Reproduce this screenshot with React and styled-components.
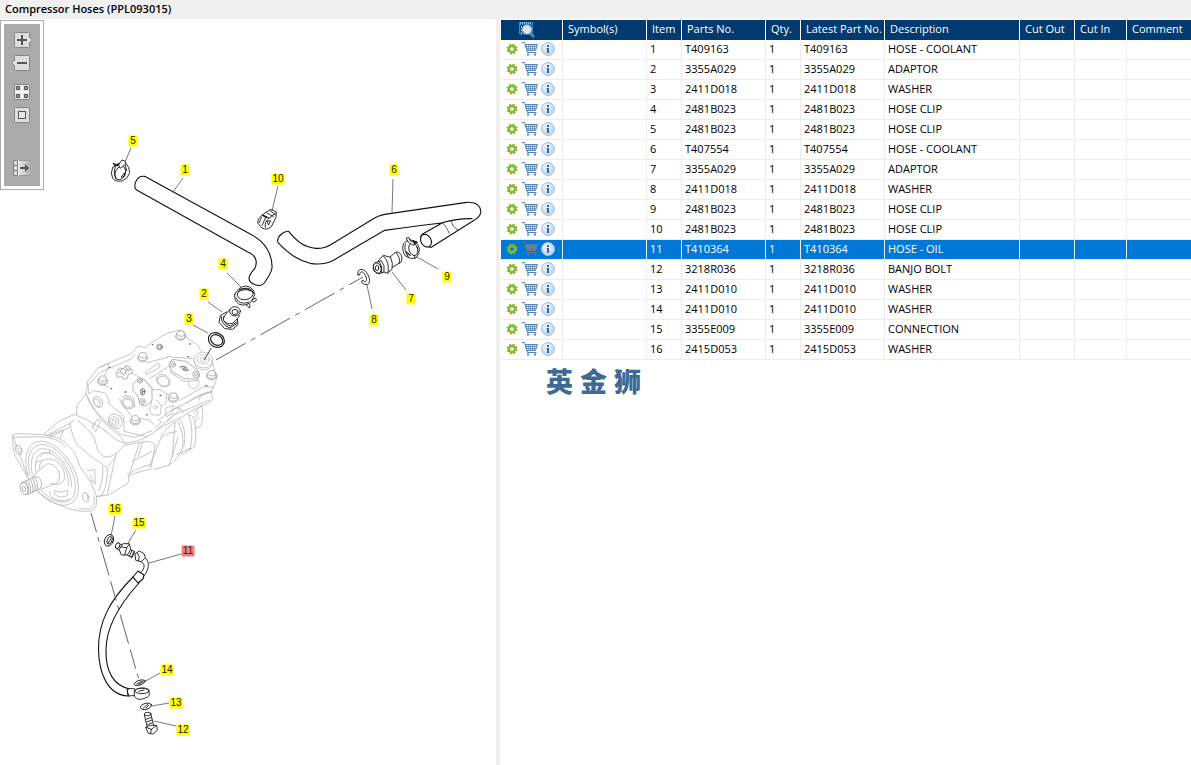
import React, { useState } from "react";
import styled, { createGlobalStyle } from "styled-components";

const GlobalStyle = createGlobalStyle`
  * {
    box-sizing: border-box;
  }
  body {
    margin: 0;
    background: #fff;
    color: #000;
    font-family: "Open Sans", "Noto Sans", sans-serif;
    font-size: 11px;
  }
`;

const Page = styled.div`
  display: flex;
  flex-direction: column;
  min-height: 100vh;
`;

const TitleBar = styled.h1`
  margin: 0;
  padding: 0 5px 2px;
  background: #f0f0f0;
  font-size: 11px;
  font-weight: 600;
  line-height: 17px;
`;

const Panes = styled.main`
  flex: 1;
  display: grid;
  grid-template-columns: minmax(0, 496fr) 4px minmax(0, 691fr);
`;

const DrawingPane = styled.section`
  position: relative;
  overflow: hidden;
`;

const Splitter = styled.div`
  background: #f0f0f0;
`;

const ListPane = styled.section`
  padding: 1px 0 0 1px;
  overflow: hidden;
`;

const ToolBox = styled.div`
  position: absolute;
  top: 1px;
  left: 0;
  padding: 3px;
  border: 1px solid #ababab;
  background: #fff;
`;

const ToolStack = styled.div`
  display: flex;
  flex-direction: column;
  gap: 13px;
  padding: 8px 8px 10px;
  background: #ababab;
`;

const ToolGroup = styled.div`
  display: flex;
  flex-direction: column;
  gap: 7px;
  padding-top: ${({ $apart }) => ($apart ? "24px" : "0")};
`;

const IconButton = styled.button`
  display: block;
  padding: 0;
  border: 0;
  background: none;
  cursor: pointer;
  line-height: 0;

  svg {
    display: block;
  }
`;

const Drawing = styled.svg`
  display: block;
  width: 100%;
  height: auto;
`;

const Line = styled.g`
  fill: ${({ $fill }) => $fill || "none"};
  stroke: ${({ $color }) => $color || "#111"};
  stroke-width: ${({ $w }) => $w || 2.6};
  stroke-linejoin: round;
  stroke-linecap: round;
`;

const TagText = styled.text`
  font-family: "Liberation Sans", Arial, sans-serif;
  font-size: 10px;
  text-anchor: middle;
  fill: #222;
`;

const Table = styled.table`
  width: 100%;
  border-collapse: separate;
  border-spacing: 0;
  table-layout: fixed;
`;

const HeadCell = styled.th`
  height: 20px;
  padding: 0 0 2px 5px;
  border-right: 1px solid #fff;
  background: #003a70;
  color: #fff;
  font-weight: 400;
  line-height: 18px;
  text-align: left;
  white-space: nowrap;

  &:last-child {
    border-right: 0;
  }
`;

const HeadIcon = styled.div`
  display: flex;
  justify-content: center;
  padding: 1px 14px 0 0;
`;

const Row = styled.tr`
  background: ${({ $on }) => ($on ? "#0078d7" : "#fff")};
  color: ${({ $on }) => ($on ? "#fff" : "#000")};
  cursor: default;
`;

const Cell = styled.td`
  height: 20px;
  padding: 0 0 2px 3px;
  border-right: 1px solid #ececec;
  border-bottom: 1px solid #ececec;
  line-height: 17px;
  white-space: nowrap;

  &:last-child {
    border-right: 0;
  }
`;

const Actions = styled.div`
  display: flex;
  align-items: center;
  gap: 3px;
  padding-left: 2px;
`;

const Mark = styled.div`
  display: flex;
  gap: 7px;
  padding: 6px 0 0 45px;
  color: #3f6a96;
  font-family: "Noto Sans CJK SC", sans-serif;
  font-size: 27px;
  font-weight: 900;
  line-height: 30px;
`;

const columns = [
  { name: "Symbol(s)", width: 84 },
  { name: "Item", width: 35 },
  { name: "Parts No.", width: 84 },
  { name: "Qty.", width: 35 },
  { name: "Latest Part No.", width: 84 },
  { name: "Description", width: 135 },
  { name: "Cut Out", width: 55 },
  { name: "Cut In", width: 52 },
  { name: "Comment" },
];

const parts = [
  ["T409163", "HOSE - COOLANT"],
  ["3355A029", "ADAPTOR"],
  ["2411D018", "WASHER"],
  ["2481B023", "HOSE CLIP"],
  ["2481B023", "HOSE CLIP"],
  ["T407554", "HOSE - COOLANT"],
  ["3355A029", "ADAPTOR"],
  ["2411D018", "WASHER"],
  ["2481B023", "HOSE CLIP"],
  ["2481B023", "HOSE CLIP"],
  ["T410364", "HOSE - OIL"],
  ["3218R036", "BANJO BOLT"],
  ["2411D010", "WASHER"],
  ["2411D010", "WASHER"],
  ["3355E009", "CONNECTION"],
  ["2415D053", "WASHER"],
];

// item number, tag centre, leader start and leader end
const tags = [
  [1, 185, 170, 183, 178, 173, 192],
  [2, 204, 294, 208, 302, 222, 312],
  [3, 189, 319, 193, 325, 208, 333],
  [4, 223, 264, 227, 273, 241, 287],
  [5, 133, 141, 131, 148, 125, 162],
  [6, 394, 170, 393, 179, 392, 213],
  [7, 411, 299, 406, 290, 392, 272],
  [8, 374, 320, 372, 309, 367, 285],
  [9, 447, 277, 438, 269, 417, 257],
  [10, 278, 179, 278, 186, 272, 211],
  [11, 188, 551, 181, 554, 149, 563],
  [12, 183, 730, 176, 726, 154, 721],
  [13, 176, 703, 169, 703, 152, 706],
  [14, 167, 670, 160, 673, 144, 682],
  [15, 139, 523, 136, 530, 128, 543],
  [16, 115, 509, 115, 516, 111, 536],
];

function Pad() {
  return (
    <rect x="2.5" y=".5" width="15" height="15" rx="1" fill="#dedede" stroke="#858585" />
  );
}

function ZoomInIcon() {
  return (
    <svg width="20" height="16">
      <Pad />
      <path d="M17 5.500L19.500 8L17 10.500z" fill="#eee" />
      <path d="M17.500 5L20 8l-2.500 3" fill="none" stroke="#888" strokeWidth=".7" />
      <path d="M5 8h10M10 3v10" stroke="#555" strokeWidth="2" />
    </svg>
  );
}

function ZoomOutIcon() {
  return (
    <svg width="20" height="16">
      <Pad />
      <path d="M3 5.500L.500 8L3 10.500z" fill="#eee" />
      <path d="M2.500 5L0 8l2.500 3" fill="none" stroke="#888" strokeWidth=".7" />
      <path d="M5 8h10" stroke="#555" strokeWidth="2" />
    </svg>
  );
}

function TilesIcon() {
  return (
    <svg width="20" height="16">
      <Pad />
      <path d="M10 1v14M3 8h14" stroke="#f4f4f4" strokeWidth="2" />
      <path
        d="M4.5 2.5h3v3h-3zM12.5 2.5h3v3h-3zM4.5 10.5h3v3h-3zM12.5 10.5h3v3h-3z"
        fill="#999"
        stroke="#555"
      />
    </svg>
  );
}

function FitIcon() {
  return (
    <svg width="20" height="16">
      <Pad />
      <rect x="6.5" y="4.5" width="7" height="7" fill="#e6e6e6" stroke="#555" />
    </svg>
  );
}

function ExportIcon() {
  return (
    <svg width="20" height="16">
      <defs>
        <linearGradient id="fade">
          <stop offset="0" stopColor="#e8e8e8" />
          <stop offset="1" stopColor="#ababab" />
        </linearGradient>
      </defs>
      <rect x="7" y="1" width="12" height="14" fill="url(#fade)" />
      <path
        d="M1.5 .5h4v5h-4zM1.5 5.5h4v5h-4zM1.5 10.5h4v5h-4z"
        fill="#dcdcdc"
        stroke="#808080"
      />
      <path d="M7 .5h11M7 15.500h11" stroke="#999" />
      <path d="M6.500 0v16" stroke="#eee" />
      <path d="M8 8h6" stroke="#555" strokeWidth="2" />
      <path d="M13 4l4 4-4 4z" fill="#555" />
    </svg>
  );
}

function GearIcon() {
  return (
    <svg width="12" height="12" viewBox="-6 -6 12 12">
      <circle r="4.4" fill="none" stroke="#7fb526" strokeWidth="2" strokeDasharray="2 1.46" />
      <circle r="3" fill="none" stroke="#86bb2c" strokeWidth="2.4" />
    </svg>
  );
}

function CartIcon({ dim }) {
  const line = dim ? "#5d7894" : "#5485b5";
  return (
    <svg width="17" height="14" viewBox="-1 0 17 14" fill="none" stroke={line}>
      <path d="M3.500 2.500H15.500L13.500 8.500H5z" fill={dim ? "#5f93c2" : "#dbe7f3"} />
      <path
        d="M4 4.500h11M4.500 6.500h9.500M6.500 3v5M8.500 3v5M10.500 3v5M12.500 3v5"
        strokeWidth=".7"
      />
      <path d="M0 .5h2.500L5.500 10.500H14.500" />
      <path d="M5 12.500h2M12 12.500h2" strokeWidth="2" />
    </svg>
  );
}

function InfoIcon() {
  return (
    <svg width="14" height="14">
      <circle cx="7" cy="7" r="6.500" fill="#c9ddef" stroke="#a3c1dc" />
      <circle cx="6" cy="5.500" r="4.300" fill="#e0ecf7" />
      <path d="M6 3h2v2H6zM5.500 6H8v5H6V7h-.500z" fill="#3769a8" />
    </svg>
  );
}

function PreviewIcon() {
  return (
    <svg width="16" height="16">
      <path d="M.5 .5h13v11.500H.5z" fill="#1d5486" stroke="#3f8dc0" />
      <path d="M1 1.500h12" stroke="#8ccdf0" strokeWidth="2" strokeDasharray="1 1" />
      <path d="M2.500 4v8" stroke="#7cc0e6" strokeDasharray="2 1" />
      <path d="M11 11l4 4" stroke="#4b8fc4" strokeWidth="2.500" />
      <circle cx="8" cy="7.500" r="4.500" fill="#dfe6ea" stroke="#a9c6d8" />
    </svg>
  );
}

function Tag({ tag, selected, onSelect }) {
  const [item, x, y, x1, y1, x2, y2] = tag;
  const width = item > 9 ? 13 : 9;
  return (
    <g onClick={() => onSelect(item)}>
      <path d={`M${x1} ${y1}L${x2} ${y2}`} stroke="#555" strokeWidth=".8" />
      <rect
        x={x - width / 2}
        y={y - 5.5}
        width={width}
        height="11"
        fill={selected ? "#f77c7c" : "#ff0"}
      />
      <TagText x={x} y={y + 3}>
        {item}
      </TagText>
    </g>
  );
}

function HexBolt({ x, y, r = 12 }) {
  return (
    <g transform={`translate(${x} ${y})`}>
      <path d={`M${-r} -4L${-r / 2} ${-r}L${r / 2} ${-r}L${r} -3L${r} 6L${r / 2} ${r}L${-r / 2} ${r}L${-r} 6Z`} />
      <path fill="none" d={`M${-r} -4L${-r / 2} 3L${r / 2} 4L${r} -3`} />
      <path fill="none" d={`M${-r - 4} 2Q${-r - 2} ${r + 4} 0 ${r + 4}Q${r + 2} ${r + 3} ${r + 4} 2`} />
    </g>
  );
}

function Compressor() {
  return (
    <g transform="translate(0 320) scale(.33333)">
      <Line $color="#b8b8b8" $w="2.4">
        {/* mounting flange */}
        <path d="M38 347Q42 340 60 341L128 344Q180 348 204 376L224 398L240 440Q278 490 290 530L289 556Q286 570 270 574L238 573Q170 562 112 514M84 474L44 404Q38 385 38 347Z" />
        <path d="M42 352L128 350Q176 354 198 382M238 566L268 567Q282 564 283 550L282 528" />
        <ellipse cx="56" cy="390" rx="9" ry="15" transform="rotate(-22 56 390)" />
        <ellipse cx="257" cy="532" rx="9" ry="15" transform="rotate(-22 257 532)" />
        <path d="M60 380q7 8 2 20M260 521q7 8 1 20" />
        {/* pulley bearing rings */}
        <path d="M84 468C62 390 98 354 138 366C190 380 240 456 235 512C230 565 170 576 112 512" />
        <path d="M90 466C72 394 106 364 142 376C190 392 230 460 226 510C220 556 170 562 120 508" />
        <path d="M97 462C84 404 112 378 142 388C180 398 218 456 214 500M108 456C100 412 122 388 150 400C184 414 210 460 205 496" />
        <path d="M118 448C116 426 134 412 156 418C184 426 200 460 192 480C184 496 164 494 152 490" />
        <path d="M124 446L140 432Q160 428 174 450Q184 474 172 488L124 508M124 446L96 470" />
        <path d="M120 410q14 -16 30 -10l-2 -10M128 420l-20 8M165 512l-2 10q20 16 40 4l0 -16q-18 12 -38 2M150 512q-4 14 10 22q22 14 48 4" />
      </Line>
      <Line $color="#999" $w="2.2" $fill="#fff">
        {/* threaded shaft */}
        <path d="M64 489L104 470Q118 468 124 484Q128 500 120 506L82 524Z" />
        <ellipse cx="73" cy="506" rx="12" ry="18" transform="rotate(-15 73 506)" />
        <ellipse cx="72" cy="507" rx="5" ry="8" transform="rotate(-15 72 507)" />
        <path fill="none" d="M76 484q12 16 8 38M83 481q12 16 8 38M90 478q12 16 8 38M97 474q12 16 8 38M103 471q14 16 8 38" />
      </Line>
      <Line $color="#b8b8b8" $w="2.4">
        {/* cylinder body */}
        <path d="M130 344L176 304L230 280M136 348L210 310L222 300M150 344L210 322M180 354L190 332L148 352" />
        <path d="M210 310Q214 346 232 374Q262 404 318 440L322 446Q324 490 306 526L292 530" />
        <path d="M232 300Q250 316 270 334Q284 350 288 372Q292 398 312 410Q340 418 372 376L428 366" />
        <path d="M322 440L346 412L322 522M346 412L350 400M308 440Q312 480 296 512M262 452L284 448L286 492L270 480M290 530L328 524L384 490L388 464L418 368M270 466l10 20" />
        <path d="M384 472Q396 458 452 448L466 374Q450 360 428 366L414 410M382 464Q420 440 452 434M396 424Q420 414 456 394M462 448L506 436Q536 416 548 384Q554 340 532 302" />
        <path d="M448 440L474 376L484 352Q506 336 530 334M482 350Q502 320 526 306L516 412L506 436M516 412L534 350M546 404L584 380Q592 330 580 290L560 282M538 294Q562 330 552 380M566 284Q584 330 570 388M528 404L572 384M584 326L604 318Q612 290 606 256L580 280M588 292q8 -12 4 -18M584 306l14 -14" />
        {/* valve head casting */}
        <path d="M230 286L230 258L258 222L264 182L296 142L396 100L408 84L420 78L438 84L448 72L500 40L526 34Q542 26 554 38L558 52L592 74L604 94M636 122L644 152L652 168L644 194L632 216L638 236L628 248L566 276L548 290L490 318L464 336L440 350L416 362L374 370L346 358L340 352L302 322L278 310L262 300L230 286" />
        <path d="M264 196L302 156L392 118L404 104M300 142L328 130L314 168L308 190L326 204M264 196L266 222L280 212L312 218Q326 228 328 252L340 262L368 284L372 306L372 334L440 350M258 222Q272 270 330 324L364 352L374 370M262 228Q290 290 340 324L364 344L406 352L456 332M464 326L484 306L476 300L512 272L600 228L632 216M470 330L520 286L630 240M512 272L540 260M498 264L520 256L516 280L500 290Z" />
        <path d="M372 260L398 292L446 300L462 314M376 262Q364 246 356 236M366 230Q384 222 400 234L404 262M456 240L448 272L456 284L480 286L484 258L498 250L500 222L480 208L460 210M484 258L470 240M460 210L440 186M448 176L506 140" />
        <path d="M514 152L512 158L552 184L596 182M566 184Q562 206 584 206Q600 200 596 182M436 158L472 130L480 134L478 142L440 164ZM500 222L530 222M538 242L612 200L640 202M596 240Q600 220 636 214M502 110L580 116M440 128L504 112M560 250Q590 220 636 216" />
        <path d="M276 318L292 298L302 304L288 334ZM286 308l-8 14M526 260l26 16M500 306l44 -42M426 176L396 160" />
        {/* bosses and ports */}
        <ellipse cx="294" cy="246" rx="12" ry="18" transform="rotate(-30 294 246)" />
        <ellipse cx="291" cy="248" rx="8" ry="13" transform="rotate(-30 291 248)" />
        <ellipse cx="384" cy="250" rx="20" ry="16" transform="rotate(30 384 250)" />
        <ellipse cx="384" cy="250" rx="15" ry="12" transform="rotate(30 384 250)" />
        <ellipse cx="490" cy="182" rx="22" ry="17" transform="rotate(30 490 182)" />
        <ellipse cx="490" cy="184" rx="18" ry="14" transform="rotate(30 490 184)" />
        <ellipse cx="346" cy="304" rx="20" ry="23" transform="rotate(-30 346 304)" />
        <ellipse cx="343" cy="305" rx="13" ry="15" transform="rotate(-30 343 305)" />
        <ellipse cx="342" cy="306" rx="6" ry="8" />
        <ellipse cx="610" cy="120" rx="28" ry="24" />
        <ellipse cx="610" cy="118" rx="18" ry="14" />
        <ellipse cx="610" cy="119" rx="9" ry="7" />
        <path d="M582 124q2 22 26 26q24 0 30 -20" />
        <circle cx="466" cy="261" r="5" />
      </Line>
      <Line $color="#9a9a9a" $w="2.2" $fill="#fff">
        {/* cover plates */}
        <path fill="none" d="M400 190L412 178Q432 170 438 186L456 204L456 240L446 252Q434 264 420 252L412 226L400 212ZM508 132L516 118L558 124L590 148Q604 162 594 178L552 176L514 152Z" />
        <HexBolt x="542" y="45" />
        <HexBolt x="428" y="110" />
        <HexBolt x="308" y="180" />
        <HexBolt x="406" y="299" />
        <HexBolt x="520" y="231" />
        <HexBolt x="635" y="164" />
        <circle cx="518" cy="133" r="9" />
        <circle cx="518" cy="133" r="4" />
        <circle cx="588" cy="163" r="10" />
        <circle cx="588" cy="163" r="5" />
        <circle cx="420" cy="182" r="8" />
        <circle cx="420" cy="182" r="4" />
        <circle cx="427" cy="245" r="9" />
        <circle cx="427" cy="245" r="4" />
        <path d="M348 158l10 -14l12 2l6 -9l12 3l2 8l8 2l-2 10l-12 4l-2 12l-12 2l-4 -8l-14 2ZM358 150l14 16M366 146l14 16M376 140l12 16M352 160l40 -14" />
        <circle cx="370" cy="154" r="8" />
      </Line>
      <Line $color="#666" $w="2">
        <circle cx="479" cy="81" r="9" />
        <circle cx="479" cy="81" r="5" />
        <ellipse cx="428" cy="215" rx="7" ry="10" />
        <path d="M421 212l14 4M423 220l12 -8M428 207v18M540 140q12 -6 26 10q-12 6 -26 -10M546 140l12 14M552 138l10 14M558 140l-8 12" />
        <path strokeWidth="4" d="M457 74h1M569 72h2M564 110h2M328 142h2M333 206h2M375 216h3M480 226h3M440 284h2M618 197h3" />
      </Line>
    </g>
  );
}

function UpperParts() {
  return (
    <g transform="translate(100 120) scale(.33333)">
      <Line $fill="#fff" $w="3.3">
        {/* item 1 */}
        <path d="M134 169L452 343C495 364 518 404 516 444Q514 458 495 486Q486 500 468 495Q447 489 447 474Q448 464 464 446C474 426 468 404 442 395L114 212C104 210 102 196 108 184Q116 166 134 169Z" />
      </Line>
      <Line $fill="#fff">
        {/* item 5 clip */}
        <path d="M38 142Q30 160 38 175Q50 188 68 182Q84 176 89 158L86 142L78 130L58 132Z" />
        <ellipse cx="61" cy="159" rx="15" ry="21" transform="rotate(25 61 159)" />
        <path fill="none" d="M46 140Q38 160 48 177M64 170L74 158L72 170ZM76 136L80 152" />
        <path d="M56 134L66 120L76 124L76 134L62 144Z" />
        <path fill="#222" d="M40 130L50 134L56 130L54 138L44 136Z" />
        {/* item 10 clip */}
        <path d="M476 296L490 282L512 268L529 276L528 292L514 320Q500 332 486 324L474 310Z" />
        <path fill="none" d="M490 286L508 294L526 280M484 292L478 308M498 290L486 316M508 294Q492 304 496 322M510 272L526 284M502 304L512 302L506 314ZM500 278L520 290" />
        <path strokeWidth="4" d="M488 286L500 292" />
        {/* item 4 clip */}
        <path d="M404 524Q402 542 416 552Q440 562 456 542L464 524Q462 502 438 498Q414 500 404 524Z" />
        <ellipse cx="436" cy="522" rx="24" ry="17" transform="rotate(-10 436 522)" />
        <path fill="none" d="M408 534Q420 558 446 546M418 508Q436 500 458 516M414 516Q432 504 452 512" />
        <path d="M456 540L466 534L470 540L462 546ZM440 556L448 564L450 556L446 550Z" />
        {/* item 2 adaptor */}
        <path d="M362 586L380 576L412 596L414 614L398 628L374 626L358 608Z" />
        <path fill="none" d="M370 590Q368 612 392 618L410 606M364 590Q362 614 390 624L412 610" />
        <path d="M390 568Q370 588 370 600Q378 614 398 610Q408 602 418 588Z" />
        <ellipse cx="405" cy="574" rx="16" ry="14" />
        <ellipse cx="405" cy="576" rx="9" ry="8" />
      </Line>
      <Line $fill="#fff" $w="3.3">
        {/* item 3 washer */}
        <ellipse cx="349" cy="660" rx="25" ry="21" transform="rotate(30 349 660)" />
        <ellipse cx="350" cy="660" rx="19" ry="15" transform="rotate(30 350 660)" />
      </Line>
      <path d="M334 684L312 720" stroke="#444" strokeWidth="3" />
    </g>
  );
}

function RightParts() {
  return (
    <g transform="translate(260 150) scale(.33333)">
      <Line $fill="#fff" $w="3.3">
        {/* item 6 */}
        <path d="M86 244C112 276 134 292 168 295Q192 296 212 284L344 204Q360 194 394 190L620 157C654 156 664 172 662 188Q660 202 640 212L514 292Q496 292 485 274Q478 258 488 252L546 219Q470 228 374 241L218 332Q188 346 150 340C116 330 90 316 54 278Q50 264 64 252Q78 242 86 244Z" />
        <ellipse cx="498" cy="272" rx="15" ry="20" transform="rotate(-30 498 272)" />
        <path fill="none" d="M546 218Q600 204 636 206" />
      </Line>
      <Line $fill="#fff">
        <path fill="none" strokeWidth="2" d="M548 218Q560 230 568 250M574 214Q576 230 594 240" />
        {/* item 9 clip */}
        <path d="M430 282Q424 300 436 318Q452 330 468 324Q480 312 478 294L468 276L448 268Z" />
        <ellipse cx="460" cy="298" rx="13" ry="19" transform="rotate(-20 460 298)" />
        <path fill="none" d="M436 282Q430 302 446 322M440 306L452 316L444 314ZM464 316L464 324" />
        <path d="M440 264L446 262L450 272L464 278L460 286L444 276Z" />
        <path fill="#222" d="M460 272L472 276L466 282Z" />
        {/* item 7 adaptor */}
        <path d="M384 326L408 306Q424 306 426 324L424 336L396 352Z" />
        <path fill="none" d="M408 308Q422 322 418 340" />
        <path d="M356 330L370 316L392 322Q400 340 396 358L382 370L366 364Z" />
        <path fill="none" d="M370 318Q390 336 384 368" />
        <path d="M346 338L364 332Q376 346 372 366L356 372Q336 366 340 346Z" />
        <ellipse cx="352" cy="354" rx="11" ry="16" transform="rotate(-20 352 354)" />
        <ellipse cx="351" cy="354" rx="5" ry="8" />
        <path fill="none" d="M356 334Q370 350 364 368" />
        {/* item 8 ring */}
        <path fill="none" d="M293 374C292 354 310 354 320 368C332 384 332 404 318 404Q310 402 304 396L308 390C318 402 324 390 316 376C308 362 300 362 299 374Z" />
      </Line>
    </g>
  );
}

function LowerParts() {
  return (
    <>
      <g transform="translate(80 495) scale(.33333)">
        <Line $fill="#fff">
          {/* item 16 washer */}
          <ellipse cx="87" cy="136" rx="13" ry="18" transform="rotate(25 87 136)" />
          <ellipse cx="89" cy="136" rx="7" ry="12" transform="rotate(25 89 136)" />
          <path d="M84 144l10 -14" />
          {/* item 15 connection */}
          <path d="M114 144L164 170L156 188L108 160Z" />
          <ellipse cx="113" cy="152" rx="6" ry="9" transform="rotate(25 113 152)" />
          <path d="M130 146L148 146L152 164L142 180L124 180L118 164Z" />
          <path fill="none" d="M124 156L140 158L148 148M140 158L134 180M156 166L148 184M162 170L154 188" />
          {/* elbow end of the oil hose */}
          <path d="M188 182C214 196 208 226 186 250L178 238C198 216 196 206 180 198Z" />
          <path d="M166 176L178 168L192 176L196 188L184 200L168 196Z" />
          <path fill="none" d="M172 174Q182 184 176 198" />
        </Line>
      </g>
      <Line $fill="#fff" $w="1.1">
        {/* item 11 */}
        <path d="M133 577C110 600 98 622 98.500 650C99 674 108 695 128 696L130 689C114 686 105.500 672 106 650C106 628 118 606 139 583Z" />
        <path d="M133 577L138 571L144 575L143 579L138 583ZM133 577L138 583" />
      </Line>
      <g transform="translate(80 620) scale(.33333)">
        <Line $fill="#fff">
          {/* item 14 washer */}
          <ellipse cx="179" cy="188" rx="17" ry="7" transform="rotate(-18 179 188)" />
          <path d="M170 192l16 -8M176 193l14 -8" />
          {/* banjo end */}
          <path d="M142 206L164 206L170 226L146 228Z" />
          <path d="M164 210Q184 198 206 208L208 226Q198 238 174 238L164 230Z" />
          <ellipse cx="186" cy="213" rx="21" ry="8" />
          <path fill="none" d="M176 214l16 -4M144 206Q138 216 146 228" />
          {/* item 13 washer */}
          <ellipse cx="198" cy="259" rx="17" ry="9" transform="rotate(-15 198 259)" />
          <path d="M190 264l14 -12M198 264l8 -8" />
          {/* item 12 banjo bolt */}
          <path d="M194 284L212 280L222 320L204 326Z" />
          <ellipse cx="203" cy="282" rx="10" ry="5" />
          <path d="M198 298l16 -6M200 306l16 -6M203 314l14 -6" />
          <path d="M198 322L210 316L230 316L232 330L220 342L206 340Z" />
          <path fill="none" d="M198 322L214 328L230 316M214 328L212 340" />
        </Line>
      </g>
    </>
  );
}

function Diagram({ selected, onSelect }) {
  return (
    <Drawing viewBox="0 19 496 746" role="img" aria-label="Compressor hoses drawing">
      <Compressor />
      <UpperParts />
      <RightParts />
      <LowerParts />
      <g fill="none" stroke="#555" strokeWidth=".9">
        <path d="M216 360L363 277" strokeDasharray="34 6 5 6" />
        <path d="M91 513L139 680" strokeDasharray="20 5 5 5 30 6" />
      </g>
      {tags.map((tag) => (
        <Tag
          key={tag[0]}
          tag={tag}
          selected={tag[0] === selected}
          onSelect={onSelect}
        />
      ))}
    </Drawing>
  );
}

function PartsList({ selected, onSelect }) {
  return (
    <Table>
      <colgroup>
        <col style={{ width: 62 }} />
        {columns.map((col) => (
          <col key={col.name} style={{ width: col.width }} />
        ))}
      </colgroup>
      <thead>
        <tr>
          <HeadCell aria-label="Actions">
            <HeadIcon>
              <PreviewIcon />
            </HeadIcon>
          </HeadCell>
          {columns.map((col) => (
            <HeadCell key={col.name}>{col.name}</HeadCell>
          ))}
        </tr>
      </thead>
      <tbody>
        {parts.map(([partNo, description], index) => {
          const item = index + 1;
          const on = item === selected;
          return (
            <Row key={item} $on={on} onClick={() => onSelect(item)}>
              <Cell>
                <Actions>
                  <IconButton aria-label="Options">
                    <GearIcon />
                  </IconButton>
                  <IconButton aria-label="Add to cart">
                    <CartIcon dim={on} />
                  </IconButton>
                  <IconButton aria-label="Information">
                    <InfoIcon />
                  </IconButton>
                </Actions>
              </Cell>
              <Cell />
              <Cell>{item}</Cell>
              <Cell>{partNo}</Cell>
              <Cell>1</Cell>
              <Cell>{partNo}</Cell>
              <Cell>{description}</Cell>
              <Cell />
              <Cell />
              <Cell />
            </Row>
          );
        })}
      </tbody>
    </Table>
  );
}

function App() {
  const [selected, setSelected] = useState(11);

  return (
    <>
      <GlobalStyle />
      <Page>
        <TitleBar>Compressor Hoses (PPL093015)</TitleBar>
        <Panes>
          <DrawingPane>
            <Diagram selected={selected} onSelect={setSelected} />
            <ToolBox>
              <ToolStack>
                <ToolGroup>
                  <IconButton aria-label="Zoom in">
                    <ZoomInIcon />
                  </IconButton>
                  <IconButton aria-label="Zoom out">
                    <ZoomOutIcon />
                  </IconButton>
                </ToolGroup>
                <ToolGroup>
                  <IconButton aria-label="Tile view">
                    <TilesIcon />
                  </IconButton>
                  <IconButton aria-label="Fit to window">
                    <FitIcon />
                  </IconButton>
                </ToolGroup>
                <ToolGroup $apart>
                  <IconButton aria-label="Hide list">
                    <ExportIcon />
                  </IconButton>
                </ToolGroup>
              </ToolStack>
            </ToolBox>
          </DrawingPane>
          <Splitter />
          <ListPane>
            <PartsList selected={selected} onSelect={setSelected} />
            <Mark>
              <span>英</span>
              <span>金</span>
              <span>狮</span>
            </Mark>
          </ListPane>
        </Panes>
      </Page>
    </>
  );
}

export default App;
